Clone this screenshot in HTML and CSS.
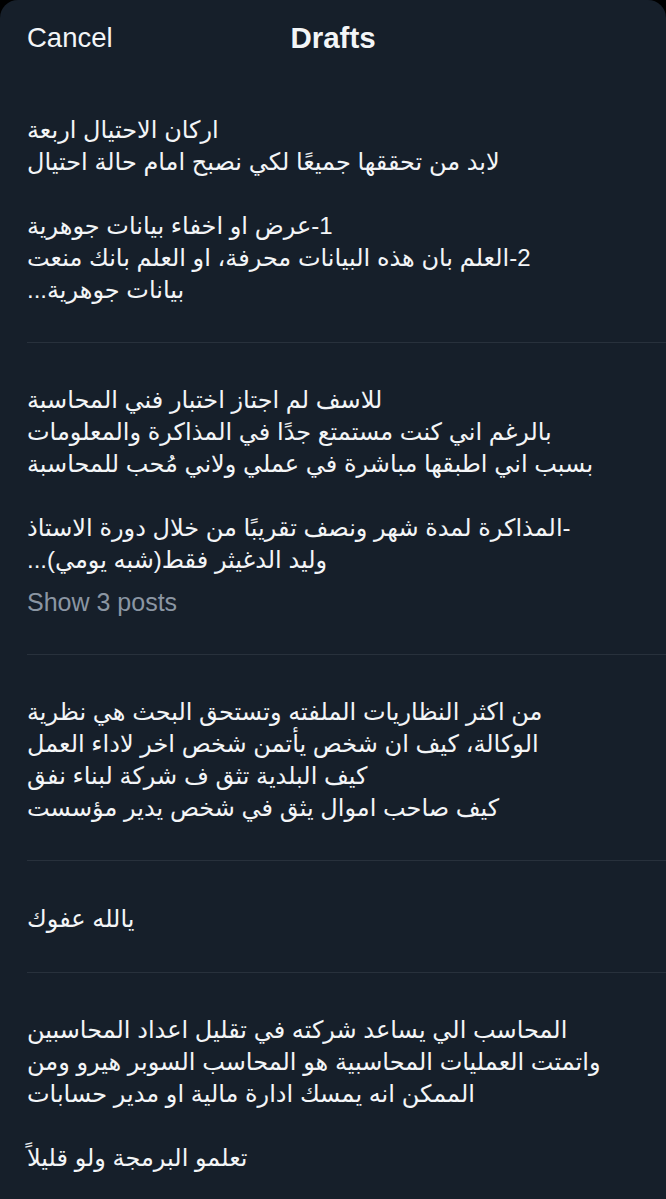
FILE: index.html
```html
<!DOCTYPE html>
<html lang="ar">
  <head>
    <meta charset="UTF-8" />
    <meta name="viewport" content="width=device-width, initial-scale=1.0" />
    <title>Drafts</title>
    <link rel="stylesheet" href="styles.css">
  </head>
  <body>
    <div class="sheet">
      <div class="topbar">
        <span class="cancel">Cancel</span>
        <span class="title">Drafts</span>
        <span></span>
      </div>

      <div class="draft">
        <p class="draft-text" dir="rtl">
          اركان الاحتيال اربعة<br>
          لابد من تحققها جميعًا لكي نصبح امام حالة احتيال
        </p>
        <p class="draft-text" dir="rtl">
          1-عرض او اخفاء بيانات جوهرية<br>
          2-العلم بان هذه البيانات محرفة، او العلم بانك منعت<br>
          بيانات جوهرية...
        </p>
      </div>

      <div class="draft">
        <p class="draft-text" dir="rtl">
          للاسف لم اجتاز اختبار فني المحاسبة<br>
          بالرغم اني كنت مستمتع جدًا في المذاكرة والمعلومات<br>
          بسبب اني اطبقها مباشرة في عملي ولاني مُحب للمحاسبة
        </p>
        <p class="draft-text" dir="rtl">
          -المذاكرة لمدة شهر ونصف تقريبًا من خلال دورة الاستاذ<br>
          وليد الدغيثر فقط(شبه يومي)...
        </p>
        <div class="thread-link">Show 3 posts</div>
      </div>

      <div class="draft">
        <p class="draft-text" dir="rtl">
          من اكثر النظاريات الملفته وتستحق البحث هي نظرية<br>
          الوكالة، كيف ان شخص يأتمن شخص اخر لاداء العمل<br>
          كيف البلدية تثق ف شركة لبناء نفق<br>
          كيف صاحب اموال يثق في شخص يدير مؤسست
        </p>
      </div>

      <div class="draft single">
        <p class="draft-text" dir="rtl">يالله عفوك</p>
      </div>

      <div class="draft last">
        <p class="draft-text" dir="rtl">
          المحاسب الي يساعد شركته في تقليل اعداد المحاسبين<br>
          واتمتت العمليات المحاسبية هو المحاسب السوبر هيرو ومن<br>
          الممكن انه يمسك ادارة مالية او مدير حسابات
        </p>
        <p class="draft-text" dir="rtl">تعلمو البرمجة ولو قليلاً</p>
      </div>
    </div>
  </body>
</html>
```

FILE: styles.css
```css
body {
  margin: 0;
  background: #000;
  font-family: "Liberation Sans", "DejaVu Sans", sans-serif;
  color: #f3f5f7;
}

.sheet {
  background: #161f2a;
  border-radius: 18px 18px 0 0;
  min-height: 100vh;
  overflow: hidden;
}

/* Header */
.topbar {
  display: grid;
  grid-template-columns: 1fr auto 1fr;
  align-items: center;
  height: 73px;
  padding: 3px 27px 0;
  box-sizing: border-box;
}

.cancel {
  font-size: 27.5px;
  color: #f3f5f7;
}

.title {
  font-size: 29.5px;
  font-weight: bold;
}

/* Draft rows */
.draft {
  margin-left: 27px;
  padding: 41px 0 36px;
  border-bottom: 1px solid #28313c;
}

.draft.single {
  padding-top: 42px;
  padding-bottom: 37px;
}

.draft.last {
  border-bottom: none;
}

.draft-text {
  margin: 0 0 32px;
  font-size: 24px;
  line-height: 32px;
  text-align: left;
  white-space: nowrap;
}

.draft-text:last-of-type {
  margin-bottom: 0;
}

.thread-link {
  margin-top: 10px;
  font-size: 25px;
  line-height: 32px;
  color: #8b96a3;
}
```
